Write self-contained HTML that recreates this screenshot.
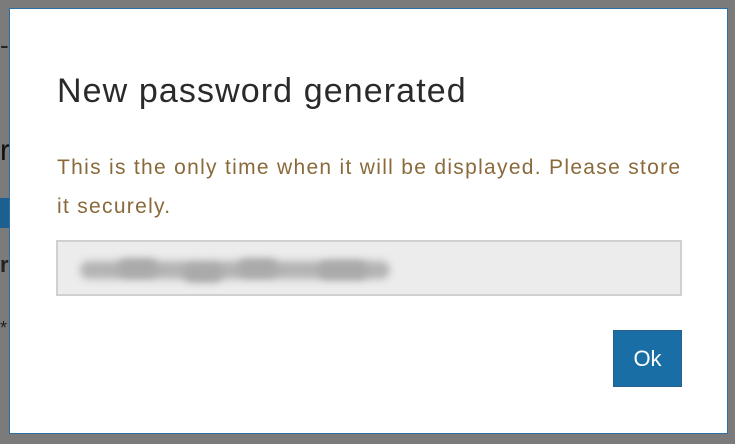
<!DOCTYPE html><html><head><style>
body{margin:0;width:735px;height:444px;background:#7b7b7b;position:relative;overflow:hidden;font-family:"Segoe UI","Liberation Sans",sans-serif}
.m{position:absolute;left:9px;top:8px;width:717px;height:424px;background:#fff;border:1px solid #2a6fa8;box-sizing:content-box}
h1{position:absolute;left:47px;top:63px;margin:0;font-weight:normal;font-size:34px;color:#2a2a2a;letter-spacing:1.1px}
p{position:absolute;left:47px;top:139px;margin:0;width:625px;font-size:21px;line-height:39px;color:#8a6a3a;letter-spacing:1.3px}
.in{position:absolute;left:46px;top:231px;width:626px;height:56px;background:#ececec;border:2px solid #d0d0d0;box-sizing:border-box}
.blur{position:absolute;top:19px;height:18px;background:#b4b4b4;border-radius:9px;filter:blur(4px)}
.b{position:absolute;left:603px;top:321px;width:69px;height:57px;background:#1a6ea6;border:1px solid #2b5f8a;box-sizing:border-box;color:#fff;font-size:22px;text-align:center;line-height:55px}
.bg{position:absolute;color:#222;font-size:26px}
</style></head><body>
<div class="bg" style="left:0;top:30px">-</div>
<div class="bg" style="left:0;top:134px;font-size:30px;color:#111">r</div>
<div style="position:absolute;left:0;top:198px;width:9px;height:30px;background:#1d5f8f"></div>
<div class="bg" style="left:0;top:252px;font-size:22px;font-weight:bold">r</div>
<div class="bg" style="left:0;top:318px;font-size:18px">*</div>
<div class="m">
<h1>New password generated</h1>
<p>This is the only time when it will be displayed. Please store it securely.</p>
<div class="in">
<div class="blur" style="left:22px;width:310px"></div>
<div class="blur" style="left:60px;width:40px;top:17px;background:#aaa"></div>
<div class="blur" style="left:125px;width:40px;top:22px;background:#aaa"></div>
<div class="blur" style="left:180px;width:40px;top:17px;background:#aaa"></div>
<div class="blur" style="left:260px;width:50px;top:19px;background:#aaa"></div>
</div>
<div class="b">Ok</div>
</div>
</body></html>
